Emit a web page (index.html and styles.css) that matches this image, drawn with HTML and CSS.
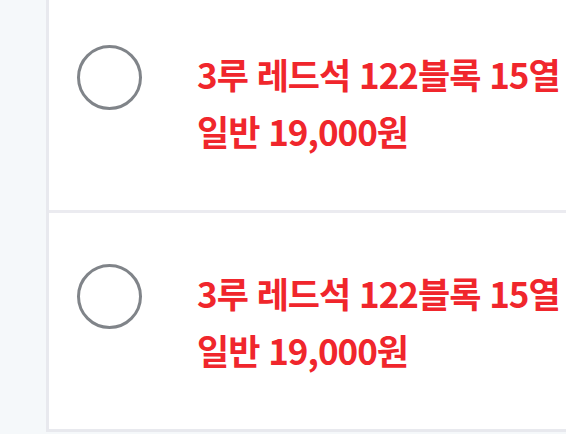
FILE: index.html
```html
<!DOCTYPE html>
<html lang="ko">
<head>
    <meta charset="utf-8">
    <link rel="stylesheet" href="styles.css">
</head>
<body>
    <div class="page">
        <div class="card">
            <div class="row">
                <span class="radio"></span>
                <div class="seat">
                    3루 레드석 122블록 15열<br>
                    일반 19,000원
                </div>
            </div>
            <div class="row">
                <span class="radio"></span>
                <div class="seat">
                    3루 레드석 122블록 15열<br>
                    일반 19,000원
                </div>
            </div>
        </div>
    </div>
</body>
</html>
```

FILE: styles.css
```css
body{
    margin: 0;
    background-color: #f5f8fa;
    font-family: "Noto Sans CJK KR", "Noto Sans", sans-serif;
    overflow: hidden;
}

.page{
    padding-left: 46px;
}

.card{
    margin-top: -6px;
    background-color: white;
    border-left: 3px solid #e8e9ee;
    border-bottom: 3px solid #e8e9ee;
}

.row{
    display: flex;
    align-items: flex-start;
    height: 216px;
}

.row + .row{
    border-top: 3px solid #ebebf0;
}

.radio{
    flex: none;
    box-sizing: border-box;
    width: 65px;
    height: 65px;
    margin: 51px 0 0 28px;
    border: 3px solid #808489;
    border-radius: 50%;
}

.seat{
    margin: 51px 0 0 55px;
    color: #f0262c;
    font-size: 35px;
    font-weight: 700;
    line-height: 57px;
    letter-spacing: -1px;
    white-space: nowrap;
}
```
